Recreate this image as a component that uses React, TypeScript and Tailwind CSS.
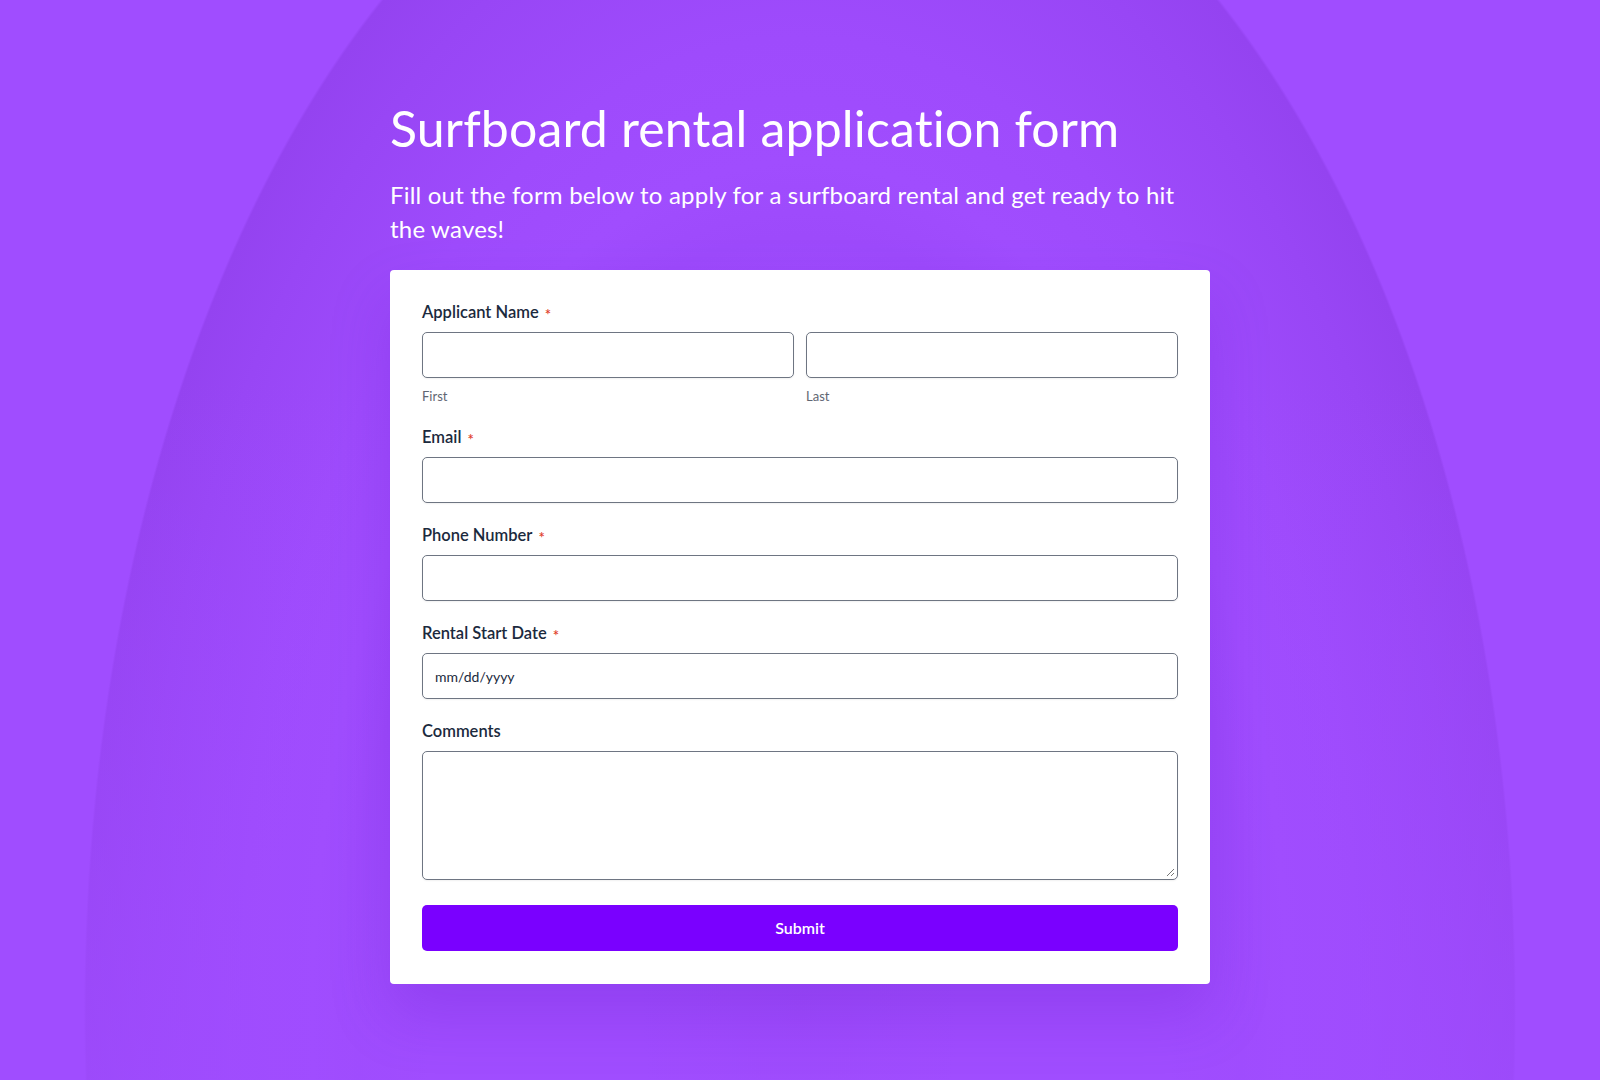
import React from "react";

const font = { fontFamily: "Lato, 'Noto Sans', sans-serif" };

function Label({ text, required }: { text: string; required?: boolean }) {
  return (
    <div className="flex items-center h-[20px] text-[16.5px] font-semibold text-[#1b2a3d] leading-[20px]">
      <span>{text}</span>
      {required && (
        <span className="ml-[6px] relative top-[2px] text-[#e0402a] text-[15px] font-semibold leading-[20px]">*</span>
      )}
    </div>
  );
}

function Input({ placeholder }: { placeholder?: string }) {
  return (
    <div className="h-[46px] w-full rounded-[5px] border border-[#6e7582] bg-white flex items-center px-[12px] text-[14px] text-[#1b2a3d] shadow-[0_1px_2px_rgba(0,0,0,0.06)]">
      {placeholder}
    </div>
  );
}

export default function App() {
  return (
    <div
      className="min-h-[1080px] w-full flex flex-col items-center bg-[#a04dff] bg-[linear-gradient(to_bottom,rgba(160,77,255,0)_35%,rgba(160,77,255,0.7)_100%),radial-gradient(ellipse_716px_1247px_at_800px_1010px,#9a48f8_0%,#a04dfe_22%,#a04dfe_52%,#9d4afb_62%,#a04dfe_68%,#9e4bfc_78%,#9846f5_92%,#9443f0_99.7%,#a04dff_100%)]"
      style={font}
    >
      <div className="w-[820px] pt-[98px] pb-[97px]">
        <h1 className="text-white text-[50px] font-normal leading-[60px] tracking-[0.15px]">
          Surfboard rental application form
        </h1>
        <p className="mt-[20px] text-white text-[24px] font-normal leading-[34px] tracking-[0.2px]">
          Fill out the form below to apply for a surfboard rental and get ready to hit the waves!
        </p>
        <div className="mt-[24px] bg-white rounded-[4px] px-[32px] pt-[32px] pb-[33px] shadow-[0_30px_60px_rgba(90,20,190,0.22)]">
          <Label text="Applicant Name" required />
          <div className="mt-[10px] grid grid-cols-2 gap-[12px]">
            <div>
              <Input />
              <div className="mt-[10px] text-[13px] leading-[16px] text-[#5f6673]">First</div>
            </div>
            <div>
              <Input />
              <div className="mt-[10px] text-[13px] leading-[16px] text-[#5f6673]">Last</div>
            </div>
          </div>
          <div className="mt-[23px]">
            <Label text="Email" required />
            <div className="mt-[10px]"><Input /></div>
          </div>
          <div className="mt-[22px]">
            <Label text="Phone Number" required />
            <div className="mt-[10px]"><Input /></div>
          </div>
          <div className="mt-[22px]">
            <Label text="Rental Start Date" required />
            <div className="mt-[10px]"><Input placeholder="mm/dd/yyyy" /></div>
          </div>
          <div className="mt-[22px]">
            <Label text="Comments" />
            <div className="mt-[10px] relative h-[129px] w-full rounded-[5px] border border-[#6e7582] bg-white shadow-[0_1px_2px_rgba(0,0,0,0.06)]">
              <svg className="absolute right-[2px] bottom-[2px]" width="9" height="9" viewBox="0 0 9 9">
                <path d="M8 1L1 8M8 5L5 8" stroke="#777" strokeWidth="1" />
              </svg>
            </div>
          </div>
          <button className="mt-[25px] h-[46px] w-full rounded-[5px] bg-[#7a00ff] text-white text-[16px] font-semibold">
            Submit
          </button>
        </div>
      </div>
    </div>
  );
}
